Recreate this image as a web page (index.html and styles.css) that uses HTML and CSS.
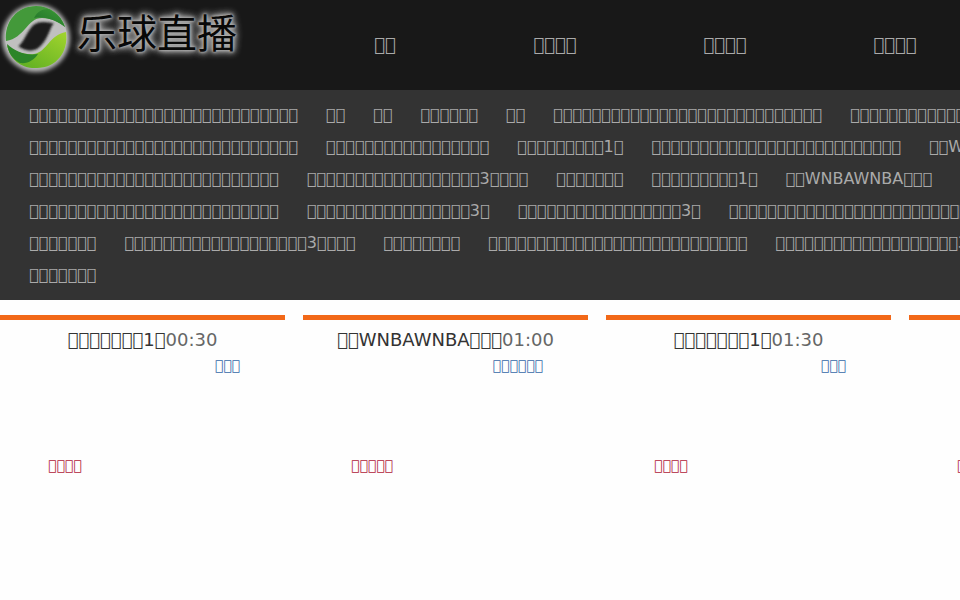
FILE: index.html
```
<!DOCTYPE html>
<html lang="zh-CN">
<head>
  <meta charset="UTF-8">
  <title>乐球直播</title>
  <meta name="viewport" content="width=device-width, initial-scale=1.0">
  <link rel="stylesheet" href="styles.css">
</head>
<body>
  <div class="page">
    <header class="header">
      <a class="logo" href="#" aria-label="乐球直播">
        <svg class="logo-mark" width="74" height="78" viewBox="0 0 74 78">
          <defs>
            <linearGradient id="dark" x1="0" y1="1" x2="1" y2="0">
              <stop offset="0" stop-color="#1f6f2a"/>
              <stop offset="1" stop-color="#3c9a35"/>
            </linearGradient>
            <linearGradient id="light" x1="0" y1="1" x2="1" y2="0">
              <stop offset="0" stop-color="#56aa20"/>
              <stop offset="1" stop-color="#a2d42e"/>
            </linearGradient>
            <filter id="glow" x="-20%" y="-20%" width="140%" height="140%">
              <feGaussianBlur stdDeviation="2"/>
            </filter>
            <filter id="soft" x="-20%" y="-20%" width="140%" height="140%">
              <feGaussianBlur stdDeviation="1"/>
            </filter>
          </defs>
          <circle cx="36" cy="38" r="34" fill="#b8b8b8" filter="url(#glow)"/>
          <circle cx="36" cy="37" r="31" fill="#c0c0c0"/>
          <path d="M20 46c5-3 8-16 15-21 5-3 11-2 17-1-3 4-5 14-11 20-6 7-14 7-21 2z" fill="#1c1c1c" stroke="#1c1c1c" stroke-width="2" filter="url(#soft)"/>
          <path d="M6 41C4 22 17 6 36 6c14 0 25 8 29 21-6-5-14-9-23-9-15 0-17 20-36 23z" fill="#43993a"/>
          <path d="M34 18c3-6 8-9 14-9 9 4 14 10 17 18-8-6-18-11-31-9z" fill="url(#dark)"/>
          <path d="M66 32c3 20-10 36-29 36C22 69 10 60 7 45c8 7 18 10 27 9 13-2 15-19 32-22z" fill="url(#light)"/>
          <path d="M7 44c8 7 18 12 31 10-4 6-10 10-18 9C12 59 8 52 7 44z" fill="#2c8528"/>
        </svg>
        <span class="logo-text">乐球直播</span>
      </a>
      <nav class="nav">
        <a href="#">&#xE83A;&#xE83A;</a>
        <a href="#">&#xE83A;&#xE83A;&#xE83A;&#xE83A;</a>
        <a href="#">&#xE83A;&#xE83A;&#xE83A;&#xE83A;</a>
        <a href="#">&#xE83A;&#xE83A;&#xE83A;&#xE83A;</a>
      </nav>
    </header>
    <ul class="tags" id="tags"></ul>
    <main class="games" id="games"></main>
  </div>
  <script src="main.js"></script>
</body>
</html>
```
FILE: styles.css
```
* {
  box-sizing: border-box;
}
body {
  margin: 0;
  background: #fefefe;
  font-family: "DejaVu Sans", sans-serif;
  font-size: 14px;
  overflow-x: hidden;
}
a {
  color: inherit;
  text-decoration: none;
}
.page {
  min-width: 1200px;
}
.header {
  display: flex;
  height: 90px;
  background: #181818;
}
.logo {
  display: flex;
  align-items: flex-start;
  width: 300px;
}
.logo-mark {
  flex: none;
}
.logo-text {
  padding-left: 3px;
  color: #080808;
  font-family: "Noto Sans CJK SC", sans-serif;
  font-size: 40px;
  line-height: 62px;
  white-space: nowrap;
  text-shadow: 0 0 2px #aaa, 0 0 3px #aaa, 0 0 4px #aaa, 0 0 6px #aaa, 0 0 8px #aaa, 0 0 10px #999;
}
.nav {
  display: flex;
}
.nav a {
  width: 170px;
  color: #aaa;
  font-size: 18px;
  line-height: 90px;
  text-align: center;
}
.tags {
  display: flex;
  flex-wrap: wrap;
  column-gap: 28px;
  margin: 0;
  padding: 9px 115px 9px 29px;
  background: #333;
  color: #aaa;
  font-size: 16px;
  line-height: 32px;
  list-style: none;
}
.tags li {
  white-space: nowrap;
}
.games {
  display: flex;
  gap: 18px;
  padding-top: 15px;
}
.game {
  flex: none;
  width: 285px;
  border-top: 5px solid #f26818;
}
.game h2 {
  margin: 0;
  padding-top: 5px;
  color: #333;
  font-size: 18px;
  font-weight: normal;
  line-height: 30px;
  text-align: center;
}
.game time {
  color: #666;
}
.teams {
  display: flex;
  flex-direction: column;
  gap: 80px;
  padding: 0 45px 0 48px;
  line-height: 20px;
}
.away {
  align-self: flex-end;
  color: #3668a8;
}
.home {
  color: #b01838;
}
```
FILE: main.js
```
// run of n name characters
const c = n => '\uE83A'.repeat(n);

const tags = [
  c(28), c(2), c(2), c(6), c(2), c(28), c(20),
  c(28), c(17), c(9) + '1' + c(1), c(26), c(2) + 'WNBAWNBA' + c(3),
  c(26), c(18) + '3' + c(4), c(7), c(9) + '1' + c(1), c(2) + 'WNBAWNBA' + c(3),
  c(26), c(17) + '3' + c(1), c(17) + '3' + c(1), c(28),
  c(7), c(19) + '3' + c(4), c(8), c(27), c(19) + '3' + c(4),
  c(7)
];

const games = [
  { name: c(7) + '1' + c(1), time: '00:30', away: c(3), home: c(4) },
  { name: c(2) + 'WNBAWNBA' + c(3), time: '01:00', away: c(6), home: c(5) },
  { name: c(7) + '1' + c(1), time: '01:30', away: c(3), home: c(4) },
  { name: c(7) + '1' + c(1), time: '02:00', away: c(3), home: c(4) }
];

document.getElementById('tags').innerHTML = tags
  .map(tag => `<li><a href="#">${tag}</a></li>`)
  .join('');

document.getElementById('games').innerHTML = games
  .map(game => `
    <section class="game">
      <h2><a href="#">${game.name}</a><time>${game.time}</time></h2>
      <div class="teams">
        <a class="away" href="#">${game.away}</a>
        <a class="home" href="#">${game.home}</a>
      </div>
    </section>`)
  .join('');
```
